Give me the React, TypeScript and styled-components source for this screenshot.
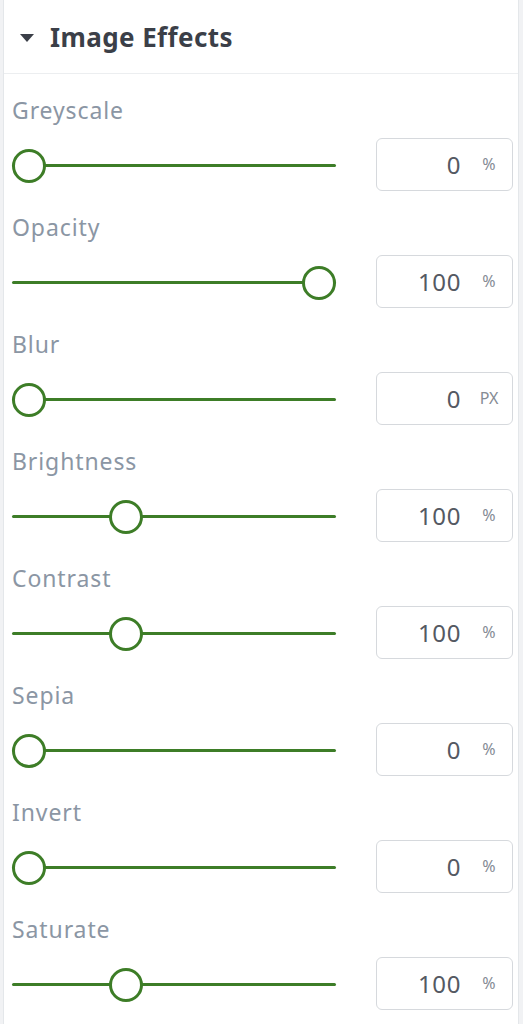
import React from "react";
import styled, { createGlobalStyle } from "styled-components";

const Global = createGlobalStyle`
  html, body { margin: 0; padding: 0; background: #f1f2f4; }
  body { font-family: "Noto Sans", "Open Sans", sans-serif; }
`;

const Panel = styled.div`
  margin-left: 3px;
  width: 516px;
  min-height: 1024px;
  background: #ffffff;
  border-left: 1px solid #e4e7ea;
  border-right: 1px solid #e4e7ea;
  box-sizing: border-box;
`;

const Header = styled.div`
  height: 74px;
  box-sizing: border-box;
  display: flex;
  align-items: center;
  gap: 16px;
  padding-left: 16px;
  border-bottom: 1px solid #eceef0;
`;

const Caret = styled.span`
  width: 0;
  height: 0;
  border-left: 7px solid transparent;
  border-right: 7px solid transparent;
  border-top: 8px solid #3b3f48;
  margin-top: 2px;
`;

const Title = styled.h2`
  margin: 0;
  font-size: 26px;
  font-weight: 700;
  color: #3b3f48;
  letter-spacing: 0.4px;
`;

const List = styled.div`
  padding: 21px 0 0 8px;
  display: flex;
  flex-direction: column;
`;

const Row = styled.div`
  height: 117px;
  display: flex;
  flex-direction: column;
  gap: 12px;
`;

const Label = styled.div`
  font-size: 23px;
  line-height: 30px;
  letter-spacing: 0.9px;
  color: #8b96a4;
`;

const Controls = styled.div`
  display: flex;
  align-items: center;
  gap: 40px;
  height: 54px;
`;

const Track = styled.div`
  position: relative;
  width: 324px;
  height: 3px;
  margin-top: 2px;
  background: #3d7d27;
  border-radius: 2px;
`;

const Thumb = styled.div`
  position: absolute;
  top: 50%;
  width: 34px;
  height: 34px;
  box-sizing: border-box;
  border: 3px solid #3d7d27;
  border-radius: 50%;
  background: #ffffff;
  transform: translateY(-50%);
  margin-top: 1px;
`;

const Box = styled.div`
  width: 137px;
  height: 53px;
  box-sizing: border-box;
  border: 1px solid #d6d9dd;
  border-radius: 6px;
  display: flex;
  align-items: center;
  justify-content: flex-end;
  padding-right: 11px;
  gap: 16px;
`;

const Value = styled.span`
  font-size: 24px;
  letter-spacing: 0.6px;
  color: #545962;
`;

const Unit = styled.span`
  width: 24px;
  text-align: center;
  font-size: 16px;
  color: #858b94;
`;

type Effect = { name: string; value: number; max: number; unit: string };

const effects: Effect[] = [
  { name: "Greyscale", value: 0, max: 100, unit: "%" },
  { name: "Opacity", value: 100, max: 100, unit: "%" },
  { name: "Blur", value: 0, max: 10, unit: "PX" },
  { name: "Brightness", value: 100, max: 300, unit: "%" },
  { name: "Contrast", value: 100, max: 300, unit: "%" },
  { name: "Sepia", value: 0, max: 100, unit: "%" },
  { name: "Invert", value: 0, max: 100, unit: "%" },
  { name: "Saturate", value: 100, max: 300, unit: "%" },
];

export default function App() {
  return (
    <>
      <Global />
      <Panel>
        <Header>
          <Caret />
          <Title>Image Effects</Title>
        </Header>
        <List>
          {effects.map((e) => (
            <Row key={e.name}>
              <Label>{e.name}</Label>
              <Controls>
                <Track>
                  <Thumb style={{ left: `${(e.value / e.max) * 290}px` }} />
                </Track>
                <Box>
                  <Value>{e.value}</Value>
                  <Unit>{e.unit}</Unit>
                </Box>
              </Controls>
            </Row>
          ))}
        </List>
      </Panel>
    </>
  );
}
